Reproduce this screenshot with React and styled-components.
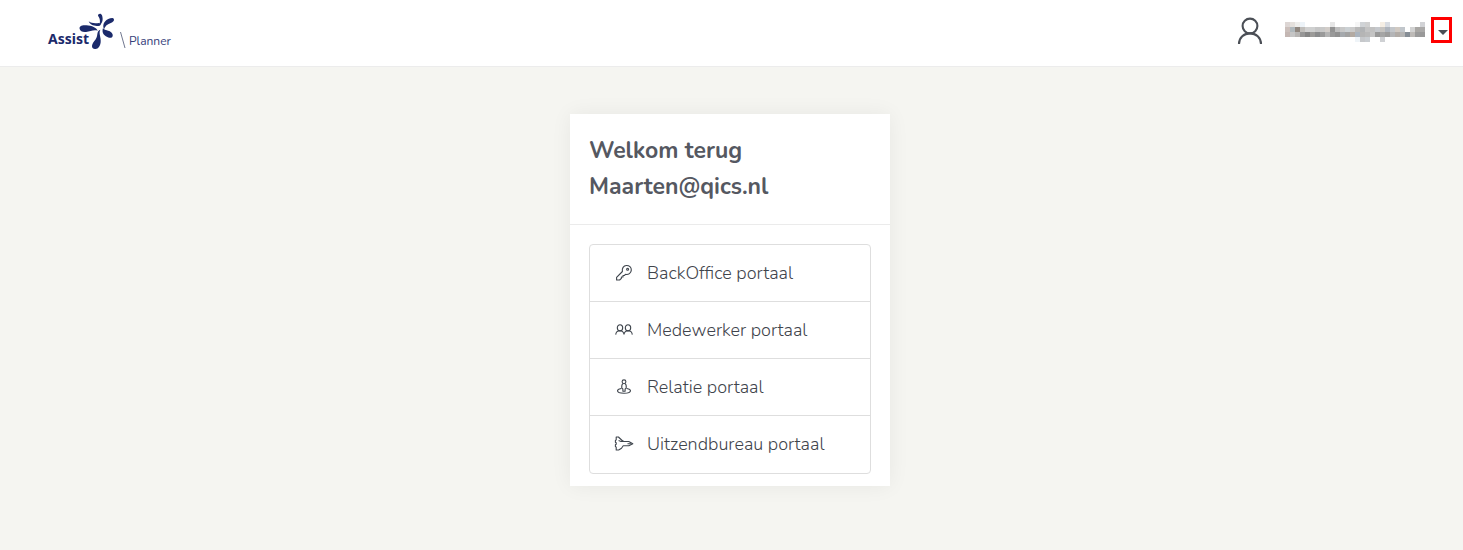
import React from "react";
import styled, { createGlobalStyle } from "styled-components";

const GlobalStyle = createGlobalStyle`
  * {
    box-sizing: border-box;
  }
  body {
    margin: 0;
    background: #f5f5f1;
    color: #4b4f56;
    font-family: Nunito, "Open Sans", "Noto Sans", sans-serif;
  }
`;

const Header = styled.header`
  display: flex;
  justify-content: space-between;
  height: 67px;
  padding: 0 11px 0 48px;
  background: #fff;
  border-bottom: 1px solid #ececec;
`;

const Brand = styled.a`
  display: flex;
  align-items: flex-end;
  height: 51px;
  color: #1b2a6b;
  text-decoration: none;
  svg {
    display: block;
    flex: none;
  }
`;

const BrandName = styled.span`
  width: 31px;
  font: 700 14px/24px "Noto Sans", sans-serif;
  white-space: nowrap;
`;

const BrandProduct = styled.span`
  padding-left: 3px;
  color: #35407a;
  font-size: 12px;
  line-height: 20px;
`;

const Account = styled.div`
  display: flex;
  align-items: flex-start;
  padding-top: 17px;
  svg {
    display: block;
  }
  .avatar {
    margin-right: 22px;
  }
  .account-name {
    margin: 5px 5px 0 0;
  }
`;

const MenuButton = styled.button`
  display: flex;
  align-items: center;
  justify-content: center;
  width: 21px;
  height: 26px;
  padding: 4px 0 0 3px;
  background: none;
  border: 3px solid #f00;
`;

const Main = styled.main`
  display: flex;
  justify-content: center;
  padding: 47px 3px 64px 0;
`;

const Card = styled.section`
  width: 320px;
  background: #fff;
  box-shadow: 0 0 20px rgba(0, 0, 0, 0.06);
`;

const CardHeader = styled.div`
  padding: 19px;
  border-bottom: 1px solid #ebebeb;
`;

const Title = styled.h1`
  margin: 0;
  color: #555861;
  font-size: 23px;
  font-weight: 700;
  line-height: 36px;
`;

const PortalList = styled.nav`
  margin: 19px 19px 12px;
  border: 1px solid #dedede;
  border-radius: 4px;
`;

const PortalLink = styled.a`
  display: flex;
  align-items: center;
  height: 57px;
  padding-left: 24px;
  border-bottom: 1px solid #dedede;
  color: #3f444c;
  font-size: 18px;
  font-weight: 300;
  text-decoration: none;
  &:last-child {
    border-bottom-color: transparent;
  }
  svg {
    flex: none;
    margin-right: 13px;
  }
`;

const LogoMark = () => (
  <svg width="41" height="38" viewBox="0 0 123 114" fill="#1b2a6b" aria-hidden="true">
    <path d="M2 48C0 39 8 36 22 37C39 38 52 44 56 53C43 49 34 56 21 57C10 58 4 55 2 48Z" />
    <path d="M29 25C37 31 48 32 60 30C66 31 67 36 62 38C49 41 33 37 29 25Z" />
    <path d="M57 8C57 1 67 0 69 7C73 19 71 30 62 37C62 27 66 21 57 8Z" />
    <path d="M100 15C108 17 106 26 97 29C85 33 78 39 75 49C67 31 83 15 100 15Z" />
    <path d="M72 45C77 54 89 50 98 59C105 67 100 77 90 74C76 70 67 60 72 45Z" />
    <path d="M64 50C50 55 60 70 46 84C36 97 37 107 48 108C58 109 63 100 65 88C67 73 58 61 64 50Z" />
  </svg>
);

const Slash = () => (
  <svg width="6" height="21" viewBox="0 0 6 21" aria-hidden="true">
    <path d="M0.5 2L5 18" stroke="#70778f" />
  </svg>
);

const UserIcon = () => (
  <svg className="avatar" width="26" height="28" viewBox="0 0 26 28" fill="none" stroke="#4b4f56" strokeWidth="2.1" aria-hidden="true">
    <circle cx="13" cy="9" r="7.4" />
    <path d="M2 27C2 20.5 7 16.4 13 16.4S24 20.5 24 27" />
  </svg>
);

// obscured account name, one shade per block
const NAME_BLOCKS = [
  "ddd6d4 e4e0dc eeeeec edf3f8 fff fff fff fff fff e6e6e6 fff fff fff fff f6f6f6 d0d3d6 d0d0d0 fff fff f5eee4 d8dce2 fff fff fff fff fff fff d2d3d6",
  "cbbfbb b0b8bc 90877f c0bebb d0d0d0 cfd0d0 c6c6c6 c9c9c9 d2cdc9 929292 bdbdbd c8c8c8 cbd0d3 cbcbcb b9b9b9 b1b3b5 c3c3c3 c1c1c1 c5c8cc c5c3c0 aeb4bc c3c6ca d0c9c2 c1c6cb fff d2d2d2 a9a7a4 aaa9a8",
  "c4b7b3 c5c5c5 b7b5b3 969696 858585 9c9b99 8b8c8d 9a9a9a b4b4b4 999 909090 a5a9ad a2a2a2 b3aaa2 abb4be b5b5b5 b9b9b9 c4c4c4 999 a5a5a5 9c9c9c b4b5b7 b2aca7 b4b4b4 868e96 bdbab7 9b9b9b 999",
  "fff fff fff fff fff fff fff fff fff fff fff fff fff fff eff4f8 c6c8cb c9cdd1 fff fff cfd1d4 fff fff fff fff fff fff fff fff",
];

const AccountName = () => (
  <svg className="account-name" width="141" height="20" viewBox="0 0 141 20" shapeRendering="crispEdges" aria-hidden="true">
    {NAME_BLOCKS.map((row, y) =>
      row.split(" ").map((shade, x) => (
        <rect key={`${x}-${y}`} x={x * 5} y={y * 5} width="5" height="5" fill={`#${shade}`} />
      ))
    )}
  </svg>
);

const Icon = ({ children }) => (
  <svg width="20" height="20" viewBox="0 0 20 20" fill="none" stroke="#3f454d" strokeWidth="1.1" strokeLinejoin="round" aria-hidden="true">
    {children}
  </svg>
);

const KeyIcon = () => (
  <Icon>
    <path d="M8.4 8.5C7.7 5.2 9.6 2.7 12.3 2.5C15.3 2.3 17.4 4.4 17.3 7.1C17.1 10.1 14.5 12 11.6 11.4L10.3 12.5H9V14H7.4V15.4L5.6 17H2.6V14.4Z" />
    <circle cx="13.6" cy="6.2" r="1" />
  </Icon>
);

const PeopleIcon = () => (
  <Icon>
    <ellipse cx="6" cy="7.8" rx="2.7" ry="3.1" />
    <ellipse cx="14" cy="7.8" rx="2.7" ry="3.1" />
    <path d="M1.7 14.6C2 12.2 3.7 10.8 6 10.8S9.6 12.3 10 14.2C10.4 12.3 11.7 10.8 14 10.8S18 12.2 18.3 14.6" />
  </Icon>
);

const RelationIcon = () => (
  <Icon>
    <circle cx="10" cy="4.8" r="1.9" />
    <path d="M8.8 6.6C7.6 7.4 7.6 9 7.8 11.3L8.9 12V14.2H11.1V12L12.2 11.3C12.4 9 12.4 7.4 11.2 6.6" />
    <path d="M7.2 11.5C5 11.9 3.5 12.8 3.5 13.8C3.5 15.4 6.4 16.3 10 16.3S16.5 15.4 16.5 13.8C16.5 12.8 15 11.9 12.8 11.5" />
  </Icon>
);

const ShuttleIcon = () => (
  <Icon>
    <path d="M2.2 3H4.4L9.2 7.5H14.8L18.8 9.7L14.8 11.8H9.2L7.5 14.3L4.7 16H2.2V13.2L1.4 12.5V10.8L2.2 10.2V8.8L1.4 8.2V6.5L2.2 5.8Z" />
    <path d="M4.6 6.5L7 7.4H10M13.5 9.7H17" />
  </Icon>
);

const portals = [
  { name: "BackOffice portaal", icon: KeyIcon },
  { name: "Medewerker portaal", icon: PeopleIcon },
  { name: "Relatie portaal", icon: RelationIcon },
  { name: "Uitzendbureau portaal", icon: ShuttleIcon },
];

const App = () => {
  return (
    <>
      <GlobalStyle />
      <Header>
        <Brand href="#">
          <BrandName>Assist</BrandName>
          <LogoMark />
          <Slash />
          <BrandProduct>Planner</BrandProduct>
        </Brand>
        <Account>
          <UserIcon />
          <AccountName />
          <MenuButton type="button" aria-label="Account">
            <svg width="10" height="5" viewBox="0 0 10 5" aria-hidden="true">
              <path d="M0 0H10L5 5Z" fill="#4b4f56" />
            </svg>
          </MenuButton>
        </Account>
      </Header>
      <Main>
        <Card>
          <CardHeader>
            <Title>
              Welkom terug
              <br />
              Maarten@qics.nl
            </Title>
          </CardHeader>
          <PortalList>
            {portals.map(({ name, icon: PortalIcon }) => (
              <PortalLink href="#" key={name}>
                <PortalIcon />
                {name}
              </PortalLink>
            ))}
          </PortalList>
        </Card>
      </Main>
    </>
  );
};

export default App;
